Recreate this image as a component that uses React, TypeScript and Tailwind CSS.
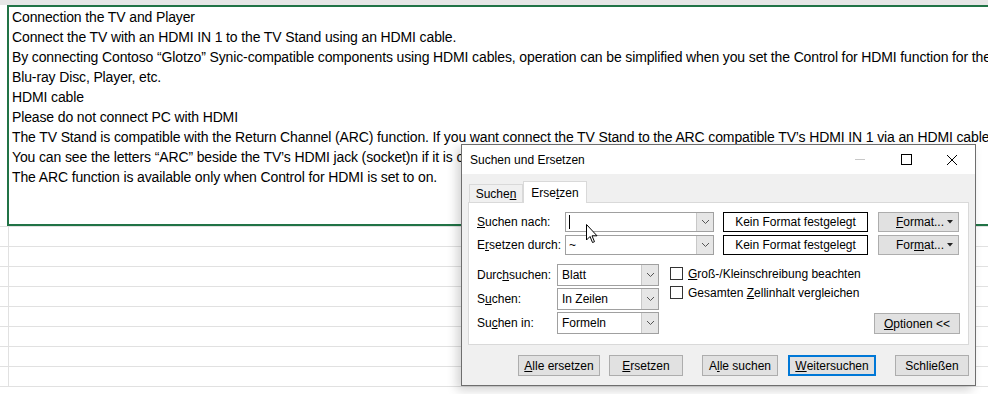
import React from "react";

const sheetLines = [
  "Connection the TV and Player",
  "Connect the TV with an HDMI IN 1 to the TV Stand using an HDMI cable.",
  "By connecting Contoso “Glotzo” Synic-compatible components using HDMI cables, operation can be simplified when you set the Control for HDMI function for the",
  "Blu-ray Disc, Player, etc.",
  "HDMI cable",
  "Please do not connect PC with HDMI",
  "The TV Stand is compatible with the Return Channel (ARC) function. If you want connect the TV Stand to the ARC compatible TV’s HDMI IN 1 via an HDMI cable, w",
  "You can see the letters “ARC” beside the TV’s HDMI jack (socket)n if it is compatible with the ARC function. The sound of the TV is output if the TV is set",
  "The ARC function is available only when Control for HDMI is set to on.",
];

const Chevron = () => (
  <svg width="9" height="6" viewBox="0 0 9 6">
    <path d="M1 1 L4.5 4.5 L8 1" fill="none" stroke="#555" strokeWidth="1" />
  </svg>
);

const Combo = ({ value, caret }: { value: string; caret?: boolean }) => (
  <div className="flex h-[20px] w-[149px] border border-[#a0a0a0] bg-white">
    <div className="flex flex-1 items-center pl-[3px] text-[12px]">
      {caret ? <span className="h-[14px] w-px bg-black" /> : value}
    </div>
    <div className="flex w-[17px] items-center justify-center border-l border-[#c8c8c8] bg-[#e6e6e6]">
      <Chevron />
    </div>
  </div>
);

const Select = ({ value }: { value: string }) => (
  <div className="flex h-[22px] w-[102px] border border-[#a0a0a0] bg-white">
    <div className="flex flex-1 items-center pl-[4px] text-[12px]">{value}</div>
    <div className="flex w-[17px] items-center justify-center border-l border-[#c8c8c8] bg-[#e6e6e6]">
      <Chevron />
    </div>
  </div>
);

const FormatBtn = ({ u }: { u: number }) => (
  <div className="flex h-[20px] w-[81px] items-center border border-[#adadad] bg-[#e1e1e1] pl-[17px] pr-[5px] text-[12px]">
    <span className="flex-1">
      {u === 0 ? (
        <>
          <span className="underline">F</span>ormat...
        </>
      ) : (
        <>
          For<span className="underline">m</span>at...
        </>
      )}
    </span>
    <svg width="6" height="4" viewBox="0 0 6 4">
      <path d="M0 0 L6 0 L3 3.5 Z" fill="#222" />
    </svg>
  </div>
);

const Btn = ({ children, w, focus }: { children: React.ReactNode; w: string; focus?: boolean }) => (
  <div
    className={`flex h-[21px] items-center justify-center bg-[#e1e1e1] text-[12px] ${w} ${
      focus ? "border-2 border-[#0078d7]" : "border border-[#adadad]"
    }`}
  >
    {children}
  </div>
);

const Check = ({ children }: { children: React.ReactNode }) => (
  <div className="flex h-[19px] items-center gap-[5px] text-[12px]">
    <div className="h-[13px] w-[13px] border border-[#333] bg-white" />
    <span>{children}</span>
  </div>
);

export default function App() {
  return (
    <div className="relative h-[394px] w-[988px] overflow-hidden bg-white">
      {/* sheet */}
      <div className="h-[5px] bg-[#e6e6e6]" />
      <div className="flex h-[222px] border-b border-[#e1e1e1]">
        <div className="w-[7px]" />
        <div className="flex-1 overflow-hidden border-2 border-r-0 border-[#217346] pl-[3px] pt-0 font-['Liberation_Sans',sans-serif] text-[14px] tracking-[-0.13px] text-black">
          {sheetLines.map((l, i) => (
            <div key={i} className="h-[20px] whitespace-nowrap leading-[20px]">
              {l}
            </div>
          ))}
        </div>
      </div>
      {Array.from({ length: 8 }).map((_, i) => (
        <div key={i} className="flex h-[20px] border-b border-[#e1e1e1]">
          <div className="w-[9px] border-r border-[#e1e1e1]" />
        </div>
      ))}

      {/* dialog */}
      <div className="absolute left-[461px] top-[144px] flex h-[242px] w-[515px] flex-col border border-[#6e6e6e] bg-[#f0f0f0] font-['Liberation_Sans',sans-serif] text-[12px] text-black shadow-[-4px_4px_10px_rgba(0,0,0,0.18)]">
        <div className="flex h-[29px] items-center bg-white pl-[8px]">
          <span className="flex-1 text-[12px]">Suchen und Ersetzen</span>
          <div className="flex h-full items-center">
            <div className="flex w-[46px] justify-center">
              <div className="h-px w-[10px] bg-[#c8c8c8]" />
            </div>
            <div className="flex w-[46px] justify-center">
              <div className="h-[11px] w-[11px] border border-black" />
            </div>
            <div className="flex w-[46px] justify-center">
              <svg width="12" height="12" viewBox="0 0 12 12">
                <path d="M1 1 L11 11 M11 1 L1 11" stroke="#000" strokeWidth="1" />
              </svg>
            </div>
          </div>
        </div>

        <div className="flex flex-col px-[6px] pt-[7px]">
          <div className="flex items-end pl-[1px]">
            <div className="flex h-[18px] w-[54px] items-center justify-center border border-b-0 border-[#d9d9d9] bg-[#f0f0f0]">
              Suche<span className="underline">n</span>
            </div>
            <div className="relative z-10 -mb-px flex h-[22px] w-[64px] items-center justify-center border border-b-0 border-[#d9d9d9] bg-white">
              Erse<span className="underline">t</span>zen
            </div>
          </div>
          <div className="flex h-[143px] flex-col border border-[#d9d9d9] bg-white px-[8px] pt-[9px]">
            <div className="flex items-center">
              <span className="w-[88px]">
                <span className="underline">S</span>uchen nach:
              </span>
              <Combo value="" caret />
              <div className="ml-[9px] flex h-[20px] w-[145px] items-center justify-center border border-black">
                Kein Format festgelegt
              </div>
              <div className="ml-[10px]">
                <FormatBtn u={0} />
              </div>
            </div>
            <div className="mt-[3px] flex items-center">
              <span className="w-[88px]">
                E<span className="underline">r</span>setzen durch:
              </span>
              <Combo value="~" />
              <div className="ml-[9px] flex h-[20px] w-[145px] items-center justify-center border border-black">
                Kein Format festgelegt
              </div>
              <div className="ml-[10px]">
                <FormatBtn u={1} />
              </div>
            </div>

            <div className="mt-[9px] flex">
              <div className="flex flex-col gap-[2px]">
                <div className="flex items-center">
                  <span className="w-[80px]">
                    Durc<span className="underline">h</span>suchen:
                  </span>
                  <Select value="Blatt" />
                </div>
                <div className="flex items-center">
                  <span className="w-[80px]">
                    S<span className="underline">u</span>chen:
                  </span>
                  <Select value="In Zeilen" />
                </div>
                <div className="flex items-center">
                  <span className="w-[80px]">
                    Su<span className="underline">c</span>hen in:
                  </span>
                  <Select value="Formeln" />
                </div>
              </div>
              <div className="ml-[11px] flex flex-1 flex-col">
                <Check>
                  <span className="underline">G</span>roß-/Kleinschreibung beachten
                </Check>
                <Check>
                  Gesamten <span className="underline">Z</span>ellinhalt vergleichen
                </Check>
                <div className="mt-auto flex justify-end">
                  <div className="flex h-[21px] w-[86px] items-center justify-center border border-[#adadad] bg-[#e1e1e1]">
                    <span className="underline">O</span>ptionen &lt;&lt;
                  </div>
                </div>
              </div>
            </div>
          </div>
        </div>

        <div className="mt-[10px] flex items-center pl-[56px]">
          <Btn w="w-[82px]">
            <span className="underline">A</span>lle ersetzen
          </Btn>
          <div className="ml-[9px]">
            <Btn w="w-[74px]">
              <span className="underline">E</span>rsetzen
            </Btn>
          </div>
          <div className="ml-[19px]">
            <Btn w="w-[76px]">
              A<span className="underline">l</span>le suchen
            </Btn>
          </div>
          <div className="ml-[10px]">
            <Btn w="w-[88px]" focus>
              <span className="underline">W</span>eitersuchen
            </Btn>
          </div>
          <div className="ml-[19px]">
            <Btn w="w-[74px]">Schließen</Btn>
          </div>
        </div>
      </div>

      {/* mouse pointer */}
      <svg className="absolute left-[586px] top-[224px]" width="13" height="21" viewBox="0 0 13 21">
        <path
          d="M0.5 0.5 L0.5 16 L4 12.5 L6.5 18.5 L8.5 17.7 L6 11.8 L11 11.8 Z"
          fill="#fff"
          stroke="#000"
          strokeWidth="1"
        />
      </svg>
    </div>
  );
}
